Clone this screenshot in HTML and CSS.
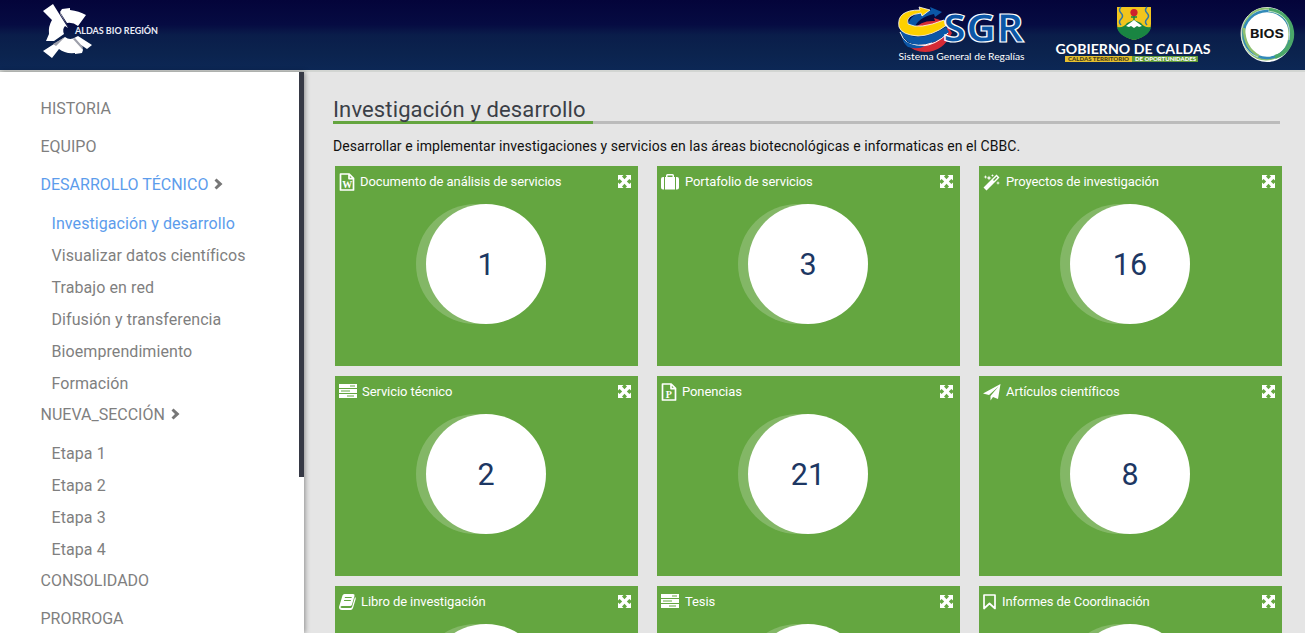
FILE: index.html
```
<!DOCTYPE html>
<html lang="es">
<head>
<meta charset="utf-8">
<title>Caldas Bio Región</title>
<link rel="stylesheet" href="styles.css">
</head>
<body>
<svg class="defs" width="0" height="0">
  <symbol id="expand" viewBox="0 0 14 14"><path d="M0 0h6L4.300 1.700 7 4.500 9.700 1.700 8 0h6v6l-1.700-1.700L9.500 7l2.800 2.700L14 8v6H8l1.700-1.700L7 9.500l-2.700 2.800L6 14H0V8l1.700 1.700L4.500 7 1.700 4.300 0 6z"/></symbol>
  <symbol id="chev" viewBox="0 0 9 12"><path d="M0.500 2.500 2.500 .5 8.500 6 2.500 11.500 .5 9.500 4 6z"/></symbol>
  <symbol id="file" viewBox="0 0 16 18"><path fill="none" stroke="currentColor" stroke-width="1.700" stroke-linejoin="round" d="M1.500 1h8.700l4.300 4.300V17h-13zM10 1v4.600h4.500"/></symbol>
  <symbol id="server" viewBox="0 0 18 14"><path fill-rule="evenodd" d="M0 0h18v4H0zM0 5h18v4H0zM0 10h18v4H0zM11 1.600v.8h5v-.8zM2 6.600v.8h9v-.8zM8 11.600v.8h7v-.8z"/></symbol>
</svg>

<header class="topbar">
  <svg class="brand" viewBox="0 0 130 64">
    <path class="white" d="M3 11 13 4 28 28 25 26Q22 29 24 34L14 41 6 41 9 34A22 22 0 0 1 12 20ZM22 9l8-1v2q9 1 16 5l-8 11q-5-4-11-3L20 12z"/>
    <path class="white" d="M3 51 14 44 25 37q5 4 11 0l2-1 14 9-5 4-6-4 2 5-1 3-7 1v-1q-10 1-16-4l-7 9z"/>
    <path class="fold" d="m20 12 6 11 3 5-9-14zM13 44l12-7-9 9zM35 38l8 9-1 2-9-10z"/>
    <text x="35" y="34" font-size="10" textLength="83" lengthAdjust="spacingAndGlyphs">ALDAS BIO REGIÓN</text>
  </svg>
  <div class="partners">
    <svg class="sgr" viewBox="0 0 130 64">
      <path fill="#d52b36" d="M15 30q8-10 22-9l-1-3 12 4-7 7-1-3Q29 25 21 33zM10 45Q34 49 50 27L54 33Q45 52 27 52 16 52 10 45Z"/>
      <path fill="#0b56a6" d="M9 27Q12 12 33 10l-1-3 12 5-7 5-1-3Q20 17 15 30zM2 30Q20 45 48 27L51 32Q38 45 21 45 6 44 2 30Z"/>
      <path fill="none" stroke="#fff" stroke-width="1" d="M2 32Q7 47 24 46 38 45 50 33M6 42q15 6 28 1"/>
      <path fill="#0b56a6" d="M4 38q9 9 23 8-7 4-17 1-4-3-6-9z"/>
      <path fill="#fdd000" stroke="#fff" stroke-width=".8" d="M1 27Q-2 10 22 10L21 7l11 3-8 6-1-3Q7 15 10 24q11 6 36-4l3 5Q34 36 20 36 4 35 1 27Z"/>
      <text class="sgr-big" x="45" y="42" font-size="39" textLength="81" lengthAdjust="spacingAndGlyphs">SGR</text>
      <text class="sgr-small" x="0.500" y="60" font-size="9.500" textLength="126" lengthAdjust="spacingAndGlyphs">Sistema General de Regalías</text>
    </svg>
    <svg class="gobierno" viewBox="0 0 160 64">
      <path fill="#f2c51d" d="M62 7h34v17q0 11-17 16-17-5-17-16z"/>
      <path fill="#198542" d="M62 27q7 1 10-4l7-3 7 3q3 5 10 4-1 9-17 13-16-4-17-13z"/>
      <path fill="#fff" d="m71 26 8-6 8 6-3 1-2-1-3 2-3-2-2 1z"/>
      <path fill="none" stroke="#3277a5" stroke-width="1.500" d="M66 7q-3 3 0 6t0 6 0 6M92 7q-3 3 0 6t0 6 0 6"/>
      <circle fill="#ce202d" cx="79" cy="12.500" r="3.600"/><path stroke="#198542" stroke-width="1.500" d="M79 16v4m-3-3h6"/>
      <text class="gob-title" x="0.500" y="53.500" font-size="14" textLength="155" lengthAdjust="spacingAndGlyphs">GOBIERNO DE CALDAS</text>
      <path fill="#e5bf2e" d="M10 56h67v6H10z"/><path fill="#5f9b38" d="M77 56h66v6H77z"/>
      <text class="gob-dark" x="13" y="61.200" font-size="6" textLength="61" lengthAdjust="spacingAndGlyphs">CALDAS TERRITORIO</text>
      <text class="gob-light" x="80" y="61.200" font-size="6" textLength="61" lengthAdjust="spacingAndGlyphs">DE OPORTUNIDADES</text>
    </svg>
    <svg class="bios" viewBox="0 0 56 56">
      <ellipse fill="#fff" cx="27" cy="28.500" rx="26" ry="27.500"/>
      <g fill="none"><ellipse stroke="#8cc070" stroke-width="2" cx="26" cy="28" rx="23.500" ry="25.500"/><circle stroke="#328ab8" stroke-width="2.500" cx="27" cy="28.500" r="23.500"/><path stroke="#4ba869" stroke-width="4" d="M29 4a24 24 0 0 1 6 47"/><path stroke="#8cc070" stroke-width="2.500" d="M4 22Q4 42 19 50"/><path stroke="#eef6f2" stroke-width=".7" d="M8 10a25 25 0 0 0 10 41M28 5q25 3 21 29"/></g>
      <text x="10" y="31.500" font-size="12" textLength="34" lengthAdjust="spacingAndGlyphs">BIOS</text>
    </svg>
  </div>
</header>

<div class="layout">
  <aside class="sidebar">
    <ul class="menu">
      <li class="item"><a class="link">HISTORIA</a></li>
      <li class="item"><a class="link">EQUIPO</a></li>
      <li class="item parent"><a class="link active">DESARROLLO TÉCNICO <svg class="chev"><use href="#chev"/></svg></a>
        <ul class="submenu">
          <li class="active">Investigación y desarrollo</li><li>Visualizar datos científicos</li><li>Trabajo en red</li><li>Difusión y transferencia</li><li>Bioemprendimiento</li><li>Formación</li>
        </ul>
      </li>
      <li class="item parent"><a class="link">NUEVA_SECCIÓN <svg class="chev"><use href="#chev"/></svg></a>
        <ul class="submenu"><li>Etapa 1</li><li>Etapa 2</li><li>Etapa 3</li><li>Etapa 4</li></ul>
      </li>
      <li class="item"><a class="link">CONSOLIDADO</a></li>
      <li class="item"><a class="link">PRORROGA</a></li>
    </ul>
    <div class="track"><div class="thumb"></div></div>
  </aside>

  <main class="content">
    <div class="heading"><h1 class="title">Investigación y desarrollo</h1></div>
    <p class="intro">Desarrollar e implementar investigaciones y servicios en las áreas biotecnológicas e informaticas en el CBBC.</p>
    <section class="cards">
      <article class="card"><div class="card-head">
        <svg class="icon" width="16" height="18"><use href="#file"/><text class="glyph" x="3.200" y="14.500" font-size="10">W</text></svg>
        <span class="label gap-s">Documento de análisis de servicios</span><svg class="expand"><use href="#expand"/></svg></div><div class="count">1</div></article>
      <article class="card"><div class="card-head">
        <svg class="icon" width="18" height="16" viewBox="0 0 18 16"><path fill-rule="evenodd" d="M5 3V1.500Q5 0 6.500 0h5Q13 0 13 1.500V3h1v12.500H4V3zm1.500 0h5V1.500h-5zM3 3v12.500H2q-2 0-2-2V5q0-2 2-2zm12 0h1q2 0 2 2v8.500q0 2-2 2h-1z"/></svg>
        <span class="label gap-m">Portafolio de servicios</span><svg class="expand"><use href="#expand"/></svg></div><div class="count">3</div></article>
      <article class="card"><div class="card-head">
        <svg class="icon" width="17" height="17" viewBox="0 0 17 17"><path fill-rule="evenodd" d="M13.500.5 16.500 3.500 3.500 16.500.5 13.500zm0 2L10 6l1 1 3.500-3.500zM2.500 1 3 2.500l1.500.5L3 3.500 2.500 5 2 3.500.5 3 2 2.500zM6 1.500 6.700 3.300l1.800.7-1.800.7L6 6.500l-.7-1.800L3.500 4l1.800-.7zM9.500 0l.4 1.100 1.100.4-1.100.4-.4 1.100-.4-1.100L8 1.500l1.100-.4zM15 7l.5 1.500L17 9l-1.500.5L15 11l-.5-1.500L13 9l1.500-.5z"/></svg>
        <span class="label gap-m">Proyectos de investigación</span><svg class="expand"><use href="#expand"/></svg></div><div class="count">16</div></article>
      <article class="card"><div class="card-head">
        <svg class="icon rack" width="18" height="14"><use href="#server"/></svg>
        <span class="label gap-s">Servicio técnico</span><svg class="expand"><use href="#expand"/></svg></div><div class="count">2</div></article>
      <article class="card"><div class="card-head">
        <svg class="icon" width="16" height="18"><use href="#file"/><text class="glyph" x="4.700" y="14.500" font-size="10">P</text></svg>
        <span class="label gap-s">Ponencias</span><svg class="expand"><use href="#expand"/></svg></div><div class="count">21</div></article>
      <article class="card"><div class="card-head">
        <svg class="icon" width="18" height="17" viewBox="0 0 18 17"><path d="M17.500 0 15 15l-5-2-2.500 3.500V12l8-9.500L6 11 0 9.500z"/></svg>
        <span class="label gap-s">Artículos científicos</span><svg class="expand"><use href="#expand"/></svg></div><div class="count">8</div></article>
      <article class="card"><div class="card-head">
        <svg class="icon" width="17" height="16" viewBox="0 0 17 16"><path fill-rule="evenodd" d="M5.500 0H14q2 0 1.500 2L13 10.500q-.5 1.500-2 1.500H3q-1.500 0-1.500 1t1.500 1h8.500q1 0 1.500-1L16 3q1 .5.700 2L14 14q-.7 2-2.500 2H3q-3 0-3-3L3.500 1.500Q4 0 5.500 0zM6 3l-.3 1h6.800l.3-1zM5.200 6l-.3 1h6.800L12 6z"/></svg>
        <span class="label gap-s">Libro de investigación</span><svg class="expand"><use href="#expand"/></svg></div><div class="count"></div></article>
      <article class="card"><div class="card-head">
        <svg class="icon rack" width="18" height="14"><use href="#server"/></svg>
        <span class="label gap-m">Tesis</span><svg class="expand"><use href="#expand"/></svg></div><div class="count"></div></article>
      <article class="card"><div class="card-head">
        <svg class="icon" width="13" height="16" viewBox="0 0 13 16"><path fill="none" stroke="currentColor" stroke-width="1.700" stroke-linejoin="round" d="M1 1h11v13.500l-5.500-5-5.500 5z"/></svg>
        <span class="label gap-m">Informes de Coordinación</span><svg class="expand"><use href="#expand"/></svg></div><div class="count"></div></article>
    </section>
  </main>
</div>
</body>
</html>
```
FILE: styles.css
```
* { box-sizing: border-box; }
html { overflow: hidden; }
body { margin: 0; height: 633px; overflow: hidden; background: #e5e5e5; font-family: Roboto, sans-serif; }
ul { margin: 0; padding: 0; list-style: none; }
.defs { position: absolute; }

.topbar { height: 70px; display: flex; justify-content: space-between; padding: 0 11px 0 40px; background: linear-gradient(#04043a 0, #060b42 35%, #0a1d4a 50%, #0b234e 75%, #0c2755 100%); }
.brand { width: 130px; height: 64px; }
.brand text { font-family: Lato, sans-serif; font-weight: 700; fill: #e9ecf5; }
.white { fill: #fff; }
.fold { fill: #9d9faa; }
.partners { display: flex; }
.sgr { width: 130px; height: 64px; margin-right: 27px; }
.gobierno { width: 160px; height: 64px; margin-right: 25px; }
.bios { width: 56px; height: 56px; margin-top: 6px; margin-right: -2px; }
.sgr-big { font-family: "Open Sans", sans-serif; font-weight: 700; fill: #0b56a6; stroke: #fff; stroke-width: 1.200px; }
.sgr-small { font-family: Lato, sans-serif; fill: #fff; }
.gob-title { font-family: Lato, sans-serif; font-weight: 700; fill: #fff; }
.gob-dark, .gob-light { font-family: Lato, sans-serif; font-weight: 900; fill: #443d1c; }
.gob-light { fill: #fff; }
.bios text { font-family: Inter, sans-serif; font-weight: 700; fill: #151515; }

.layout { height: 563px; display: flex; border-top: 2px solid #d2d5d2; }
.sidebar { width: 304px; height: 561px; display: flex; background: #fff; box-shadow: 1px 0 5px rgba(0,0,0,.4); }
.menu { width: 299px; height: 561px; overflow: hidden; padding: 21px 0 0 40.500px; }
.item { margin-bottom: 8px; color: #7f7f7f; font-size: 16px; }
.parent { margin-bottom: 0; }
.link { display: flex; align-items: center; height: 30px; }
.active { color: #5c9cec; }
.chev { width: 9px; height: 12px; margin-left: 6px; fill: #777; }
.submenu { padding: 9px 0 0 11px; margin-bottom: -1px; }
.submenu li { height: 32px; line-height: 32px; letter-spacing: .08px; }
.track { width: 5px; }
.thumb { height: 405px; background: #363945; }

.content { flex: 1; height: 561px; overflow: hidden; padding: 22px 23px 0 29px; }
.heading { height: 30px; margin-right: 2px; border-bottom: 3px solid #bbb; }
.title { width: 260px; height: 30px; margin: 0; padding-top: 1px; line-height: 30px; border-bottom: 3px solid #64a53f; font-size: 22px; font-weight: 400; color: #3b3f47; letter-spacing: .13px; white-space: nowrap; }
.intro { margin: 12px 0 10px; font-size: 14px; line-height: 20px; letter-spacing: .06px; color: #111; }
.cards { display: grid; grid-template-columns: repeat(3, 303px); gap: 10px 19px; margin-left: 2px; }
.card { height: 200px; background: #64a640; }
.card-head { height: 32px; display: flex; align-items: center; padding: 0 7px 2px 4px; color: #fff; font-size: 13px; letter-spacing: -.08px; }
.icon { position: relative; top: 1px; }
.rack { top: 0; }
.icon, .expand { fill: #fff; flex: none; }
.glyph { font-family: "Liberation Serif", serif; font-weight: 700; letter-spacing: 0; }
.gap-s { margin-left: 5px; }
.gap-m { margin-left: 6px; }
.expand { width: 13px; height: 13px; margin-left: auto; }
.count { width: 120px; height: 120px; margin: 6px 0 0 91px; border-radius: 50%; background: #fff; box-shadow: -10px 0 0 rgba(255,255,255,.2); color: #1d3763; font-size: 30.500px; font-weight: 400; line-height: 121px; text-align: center; }
```
